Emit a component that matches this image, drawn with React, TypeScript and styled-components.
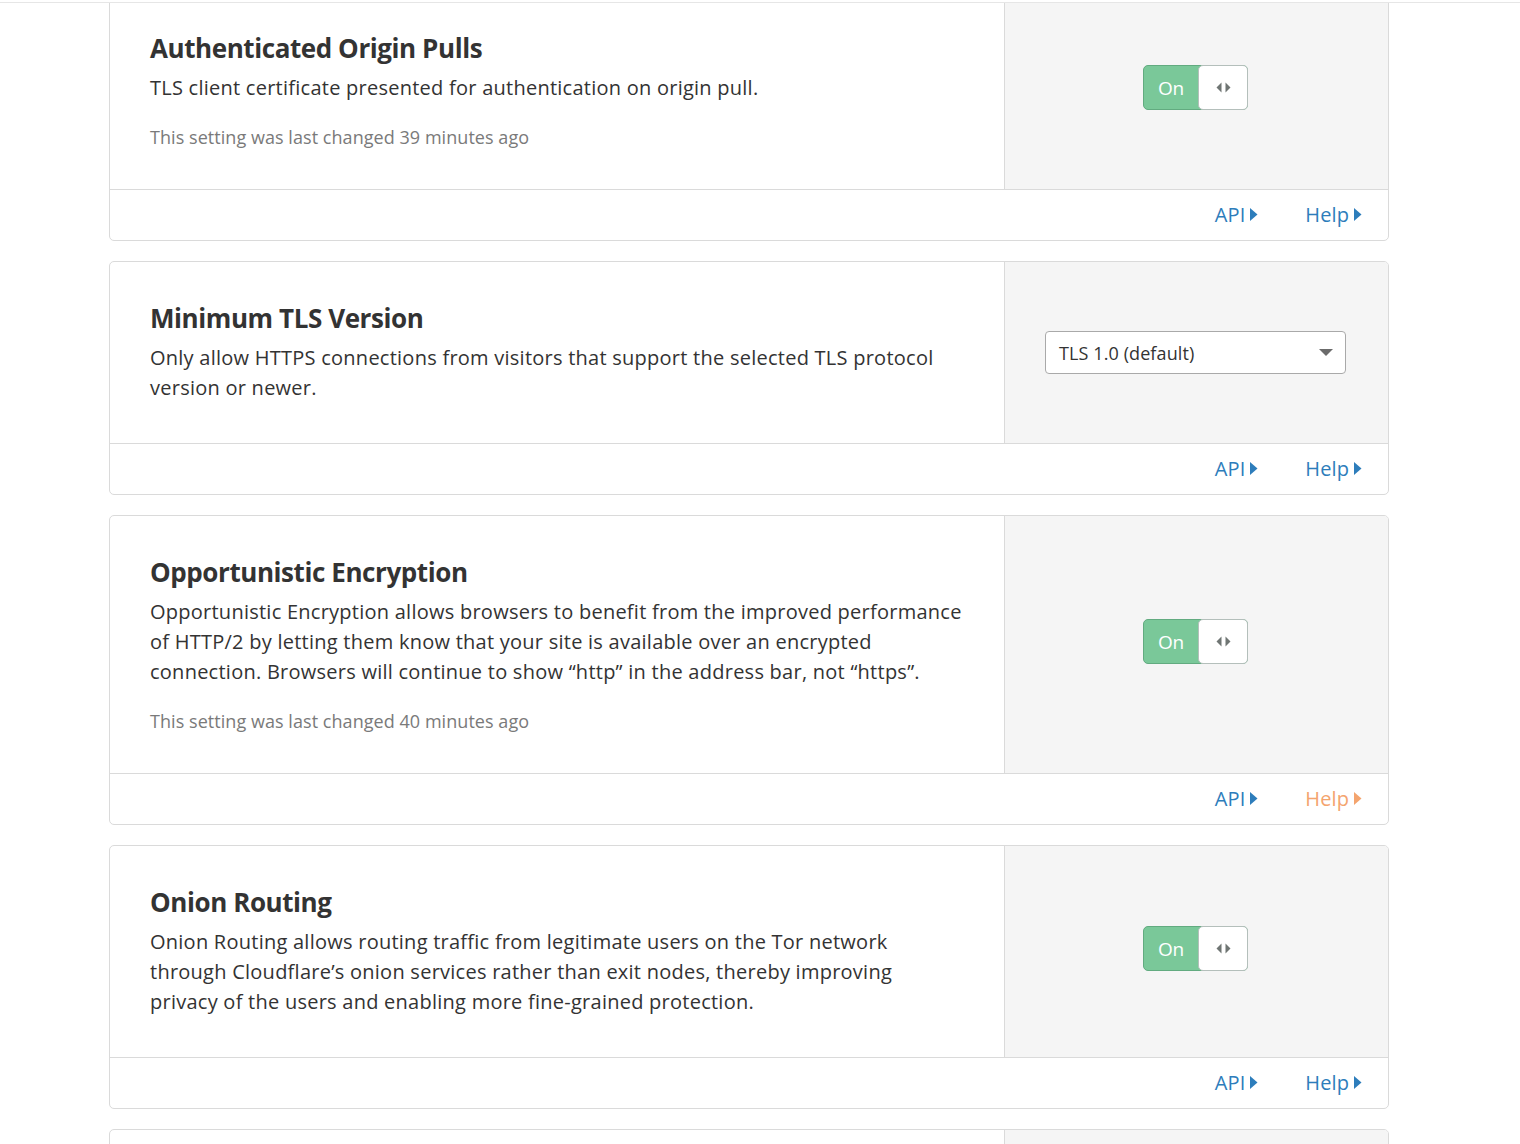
import React from "react";
import styled, { createGlobalStyle } from "styled-components";

const GlobalStyle = createGlobalStyle`
  html, body { margin: 0; padding: 0; background: #ffffff; }
  body {
    font-family: "Open Sans", "Noto Sans", "Liberation Sans", sans-serif;
    color: #333333;
    overflow: hidden;
  }
  * { box-sizing: border-box; }
`;

const TopRule = styled.div`
  position: fixed;
  top: 0;
  left: 0;
  right: 0;
  height: 3px;
  background: #ffffff;
  border-bottom: 1px solid #e6e6e6;
  z-index: 10;
`;

const Page = styled.main`
  width: 1280px;
  margin: -9px 0 0 109px;
`;

const Card = styled.section`
  border: 1px solid #dadada;
  border-radius: 5px;
  background: #ffffff;
  margin-bottom: 20px;
  overflow: hidden;
`;

const Body = styled.div`
  display: grid;
  grid-template-columns: 1fr 384px;
`;

const Info = styled.div`
  padding: 40px 40px 40px 40px;
`;

const Title = styled.h3`
  margin: 0;
  font-size: 26px;
  line-height: 32px;
  font-weight: 700;
  color: #333333;
  letter-spacing: -0.42px;
`;

const Desc = styled.p`
  margin: 9px 0 0;
  font-size: 20px;
  line-height: 30px;
  color: #333333;
  letter-spacing: 0.25px;
`;

const Meta = styled.p`
  margin: 22px 0 0;
  font-size: 18px;
  line-height: 24px;
  color: #7a7a7a;
  letter-spacing: 0.05px;
`;

const Control = styled.div`
  background: #f5f5f5;
  border-left: 1px solid #dadada;
  display: flex;
  align-items: center;
  justify-content: center;
  padding-bottom: 6px;
`;

const Toggle = styled.div`
  display: flex;
  width: 105px;
  height: 45px;
  margin-right: 2px;
  border-radius: 5px;
  background: #7ac899;
  border: 1px solid #62ab80;
`;

const ToggleLabel = styled.span`
  width: 54px;
  display: flex;
  align-items: center;
  justify-content: center;
  color: #ffffff;
  font-size: 19px;
  letter-spacing: -0.2px;
`;

const Knob = styled.span`
  flex: 1;
  margin: -1px -1px -1px 0;
  background: #ffffff;
  border: 1px solid #b4bfbb;
  border-radius: 5px;
  display: flex;
  align-items: center;
  justify-content: center;
`;

const Select = styled.div`
  width: 301px;
  height: 43px;
  margin: 0 2px -6px 0;
  border: 1px solid #a9a9a9;
  border-radius: 4px;
  background: #ffffff;
  display: flex;
  align-items: center;
  justify-content: space-between;
  padding: 0 12px 0 13px;
  font-size: 18px;
  color: #333333;
  letter-spacing: 0.1px;
`;

const Footer = styled.footer`
  border-top: 1px solid #dadada;
  height: 51px;
  display: flex;
  align-items: center;
  justify-content: flex-end;
  gap: 47px;
  padding: 0 26px 1px 0;
`;

const FooterLink = styled.a<{ $accent?: boolean }>`
  display: inline-flex;
  align-items: center;
  gap: 5px;
  font-size: 20px;
  color: ${(p) => (p.$accent ? "#f4a46e" : "#2d7dbb")};
  text-decoration: none;
  letter-spacing: 0.1px;
  cursor: pointer;
`;

const Caret = ({ color }: { color: string }) => (
  <svg width="8" height="13" viewBox="0 0 8 13">
    <path d="M0 0 L7.5 6.5 L0 13 Z" fill={color} />
  </svg>
);

const Arrows = () => (
  <svg width="15" height="11" viewBox="0 0 15 11">
    <path d="M5.5 0.5 L0.5 5.5 L5.5 10.5 Z" fill="#6f7573" />
    <path d="M9.5 0.5 L14.5 5.5 L9.5 10.5 Z" fill="#6f7573" />
  </svg>
);

const DownCaret = () => (
  <svg width="14" height="8" viewBox="0 0 14 8">
    <path d="M0 0 L14 0 L7 7 Z" fill="#6b6b6b" />
  </svg>
);

type Setting = {
  title: string;
  desc: React.ReactNode;
  meta?: string;
  control: "toggle" | "select";
  helpAccent?: boolean;
};

const settings: Setting[] = [
  {
    title: "Authenticated Origin Pulls",
    desc: "TLS client certificate presented for authentication on origin pull.",
    meta: "This setting was last changed 39 minutes ago",
    control: "toggle",
  },
  {
    title: "Minimum TLS Version",
    desc: "Only allow HTTPS connections from visitors that support the selected TLS protocol version or newer.",
    control: "select",
  },
  {
    title: "Opportunistic Encryption",
    desc: "Opportunistic Encryption allows browsers to benefit from the improved performance of HTTP/2 by letting them know that your site is available over an encrypted connection. Browsers will continue to show \u201chttp\u201d in the address bar, not \u201chttps\u201d.",
    meta: "This setting was last changed 40 minutes ago",
    control: "toggle",
    helpAccent: true,
  },
  {
    title: "Onion Routing",
    desc: "Onion Routing allows routing traffic from legitimate users on the Tor network through Cloudflare\u2019s onion services rather than exit nodes, thereby improving privacy of the users and enabling more fine-grained protection.",
    control: "toggle",
  },
];

const SettingCard = ({ s }: { s: Setting }) => (
  <Card>
    <Body>
      <Info>
        <Title>{s.title}</Title>
        <Desc>{s.desc}</Desc>
        {s.meta && <Meta>{s.meta}</Meta>}
      </Info>
      <Control>
        {s.control === "toggle" ? (
          <Toggle>
            <ToggleLabel>On</ToggleLabel>
            <Knob>
              <Arrows />
            </Knob>
          </Toggle>
        ) : (
          <Select>
            <span>TLS 1.0 (default)</span>
            <DownCaret />
          </Select>
        )}
      </Control>
    </Body>
    <Footer>
      <FooterLink>
        API <Caret color="#2d7dbb" />
      </FooterLink>
      <FooterLink $accent={s.helpAccent}>
        Help <Caret color={s.helpAccent ? "#f4a46e" : "#2d7dbb"} />
      </FooterLink>
    </Footer>
  </Card>
);

const EmptyCard = styled(Card)`
  height: 120px;
`;

const EmptyBody = styled(Body)`
  height: 100%;
`;

export default function App() {
  return (
    <>
      <GlobalStyle />
      <TopRule />
      <Page>
        {settings.map((s) => (
          <SettingCard key={s.title} s={s} />
        ))}
        <EmptyCard>
          <EmptyBody>
            <div />
            <Control />
          </EmptyBody>
        </EmptyCard>
      </Page>
    </>
  );
}
